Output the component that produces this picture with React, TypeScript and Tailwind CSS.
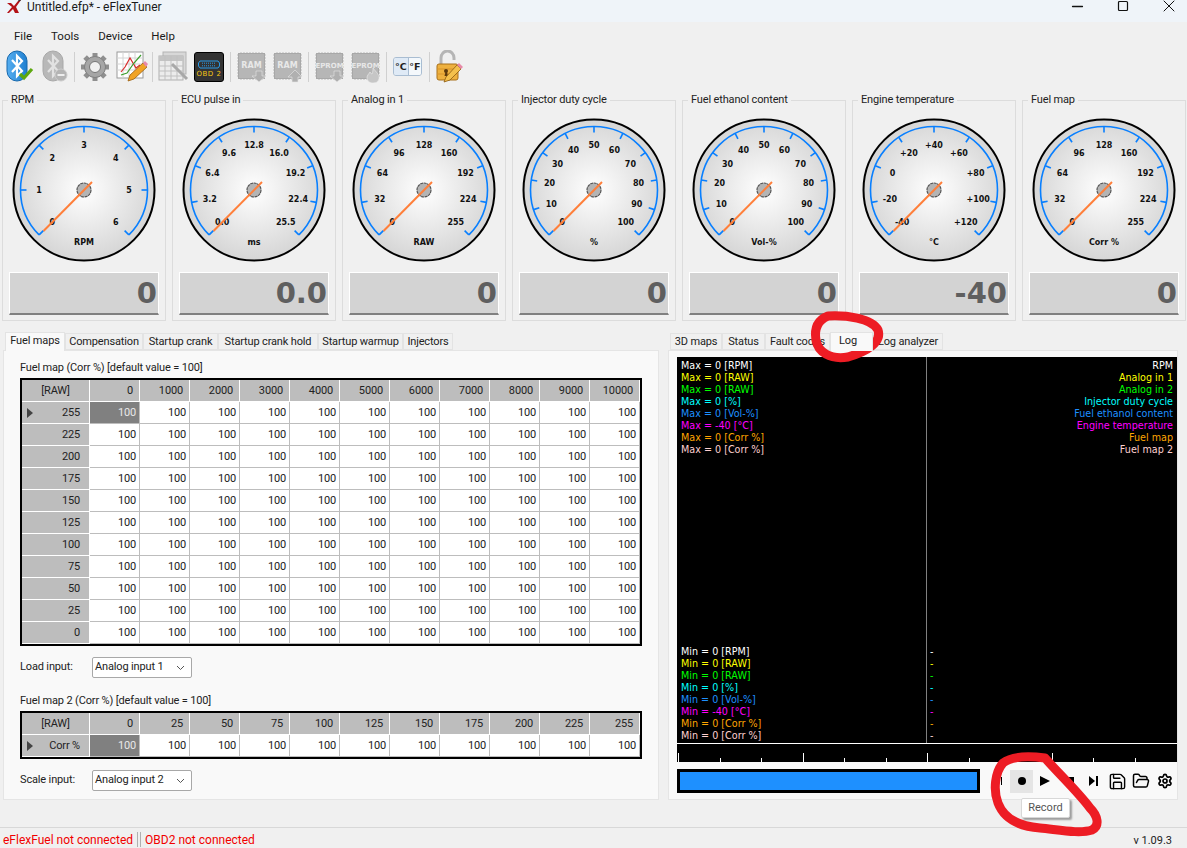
import { Save, FolderOpen, Settings, Minus, Square, X } from "lucide-react";

const gauges = [
  { title: "RPM", unit: "RPM", labels: ["0", "1", "2", "3", "4", "5", "6"], value: "0" },
  { title: "ECU pulse in", unit: "ms", labels: ["0.0", "3.2", "6.4", "9.6", "12.8", "16.0", "19.2", "22.4", "25.5"], value: "0.0" },
  { title: "Analog in 1", unit: "RAW", labels: ["0", "32", "64", "96", "128", "160", "192", "224", "255"], value: "0" },
  { title: "Injector duty cycle", unit: "%", labels: ["0", "10", "20", "30", "40", "50", "60", "70", "80", "90", "100"], value: "0" },
  { title: "Fuel ethanol content", unit: "Vol-%", labels: ["0", "10", "20", "30", "40", "50", "60", "70", "80", "90", "100"], value: "0" },
  { title: "Engine temperature", unit: "°C", labels: ["-40", "-20", "0", "+20", "+40", "+60", "+80", "+100", "+120"], value: "-40" },
  { title: "Fuel map", unit: "Corr %", labels: ["0", "32", "64", "96", "128", "160", "192", "224", "255"], value: "0" },
];

const logColors = ["text-white", "text-[#ffff00]", "text-[#00ff00]", "text-[#00ffff]", "text-[#1e90ff]", "text-[#ff00ff]", "text-[#ffa500]", "text-[#ffd0d0]"];
const logUnits = ["0 [RPM]", "0 [RAW]", "0 [RAW]", "0 [%]", "0 [Vol-%]", "-40 [°C]", "0 [Corr %]", "0 [Corr %]"];
const logNames = ["RPM", "Analog in 1", "Analog in 2", "Injector duty cycle", "Fuel ethanol content", "Engine temperature", "Fuel map", "Fuel map 2"];

const mapRows = ["255", "225", "200", "175", "150", "125", "100", "75", "50", "25", "0"];
const mapCols = ["0", "1000", "2000", "3000", "4000", "5000", "6000", "7000", "8000", "9000", "10000"];
const scaleCols = ["0", "25", "50", "75", "100", "125", "150", "175", "200", "225", "255"];

function polar(r: number, deg: number) {
  const a = (deg * Math.PI) / 180;
  return [75 + r * Math.sin(a), 75 - r * Math.cos(a)];
}

function Dial({ labels, unit }: { labels: string[]; unit: string }) {
  const [sx, sy] = polar(63.5, -135);
  const [ex, ey] = polar(63.5, 135);
  return (
    <svg width="150" height="150" viewBox="0 0 150 150" className="block">
      <defs>
        <radialGradient id="face">
          <stop offset="0%" stopColor="#ffffff" />
          <stop offset="100%" stopColor="#d6d6d6" />
        </radialGradient>
      </defs>
      <circle cx="75" cy="75" r="70.5" fill="url(#face)" stroke="#000" strokeWidth="2" />
      <path d={`M${sx} ${sy}A63.5 63.5 0 1 1 ${ex} ${ey}`} fill="none" stroke="#087fff" strokeWidth="1.6" />
      {labels.map((label, i) => {
        const deg = -135 + (i * 270) / (labels.length - 1);
        const [x1, y1] = polar(63.5, deg);
        const [x2, y2] = polar(57.5, deg);
        const [tx, ty] = polar(45, deg);
        return (
          <g key={label + i}>
            <line x1={x1} y1={y1} x2={x2} y2={y2} stroke="#087fff" strokeWidth="1.6" />
            <text x={tx} y={ty + 3} textAnchor="middle" fontSize="8" fontWeight="700" fontFamily="DejaVu Sans" fill="#111">
              {label}
            </text>
          </g>
        );
      })}
      <text x="75" y="130" textAnchor="middle" fontSize="8" fontWeight="700" fontFamily="DejaVu Sans" fill="#111">
        {unit}
      </text>
      <circle cx="75" cy="75" r="7" fill="#b4b4b4" stroke="#555" strokeWidth="1.2" strokeDasharray="3 0.6" />
      <line x1="34.5" y1="116" x2="83" y2="67" stroke="#ff7f3a" strokeWidth="2" />
    </svg>
  );
}

function GaugePanel({ title, unit, labels, value }: (typeof gauges)[number]) {
  return (
    <fieldset className="w-[164px] h-[228px] border border-[#dcdcdc] shrink-0 flex flex-col">
      <legend className="ml-[5px] px-[3px] text-[11px] tracking-[-0.15px] leading-[14px] text-[#222]">{title}</legend>
      <div className="ml-[6px] mt-[8px]">
        <Dial labels={labels} unit={unit} />
      </div>
      <div className="mx-[6px] mt-[7px] h-[43px] w-[150px] bg-[#d3d3d3] border border-white border-b-2 border-b-[#808080] flex items-center justify-end pr-[1px]">
        <span className="font-['DejaVu_Sans'] font-bold text-[29px] leading-none text-[#5f5f5f]">{value}</span>
      </div>
    </fieldset>
  );
}

function Tab({ label, width, active }: { label: string; width: string; active?: boolean }) {
  return (
    <div className={`${width} ${active ? "h-[19px] bg-[#f9f9f9] -mb-px z-10 border-b-0" : "h-[17px] mt-px bg-[#f0f0f0]"} border border-[#e3e3e3] text-center text-[11px] tracking-[-0.15px] leading-[15px] text-[#222] whitespace-nowrap`}>
      {label}
    </div>
  );
}

function Grid({ corner, cols, rows }: { corner: string; cols: string[]; rows: string[] }) {
  return (
    <div className="w-[622px] border-2 border-black grid grid-cols-[68px_repeat(11,50px)] auto-rows-[22px] text-[11px] tracking-[-0.15px] leading-[21px] text-[#222] bg-white">
      <div className="bg-[#bdbdbd] border-r border-b border-white text-center">{corner}</div>
      {cols.map((c, i) => (
        <div key={i} className="bg-[#bdbdbd] border-r border-b border-white text-right pr-[6px]">{c}</div>
      ))}
      {rows.map((r, ri) => (
        <div key={ri} className="contents">
          <div className="bg-[#bdbdbd] border-r border-b border-white text-right pr-[9px] relative">
            {ri === 0 && <span className="absolute left-[5px] top-[6px] w-0 h-0 border-y-[5px] border-y-transparent border-l-[6px] border-l-[#444]" />}
            {r}
          </div>
          {cols.map((_, ci) =>
            ri === 0 && ci === 0 ? (
              <div key={ci} className="bg-[#808080] text-[#e8e8e8] border-r border-b border-[#bdbdbd] text-right pr-[3px]">100</div>
            ) : (
              <div key={ci} className="border-r border-b border-[#bdbdbd] text-right pr-[3px]">100</div>
            )
          )}
        </div>
      ))}
    </div>
  );
}

function Combo({ label, value }: { label: string; value: string }) {
  return (
    <div className="flex items-center text-[11px] tracking-[-0.15px] text-[#222]">
      <span className="w-[72px]">{label}</span>
      <div className="w-[100px] h-[21px] bg-white border border-[#a8a8a8] rounded-[2px] flex items-center justify-between pl-[2px] pr-[6px]">
        <span>{value}</span>
        <svg width="9" height="6" viewBox="0 0 9 6"><path d="M1 1l3.5 3.5L8 1" fill="none" stroke="#555" /></svg>
      </div>
    </div>
  );
}

function Chip({ text, arrow, size = 8 }: { text: string; arrow: "down" | "up" | "fire"; size?: number }) {
  return (
    <svg width="30" height="32" viewBox="0 0 30 32" className="shrink-0">
      <g stroke="#c4c4c4" strokeWidth="1.2">
        {[3, 6, 9, 12, 15, 18, 21, 24].map((p) => (
          <g key={p}>
            <line x1={p + 1} y1="1" x2={p + 1} y2="29" />
            <line x1="0" y1={p + 1} x2="29" y2={p + 1} />
          </g>
        ))}
      </g>
      <rect x="1.500" y="2.500" width="26" height="25" fill="#b6b6b6" stroke="#a8a8a8" />
      <text x="14.500" y="17" textAnchor="middle" fontSize={size} fontWeight="700" fontFamily="DejaVu Sans" fill="#e8e8e8">{text}</text>
      {arrow === "down" && <path d="M19 20h6v5h4l-7 6-7-6h4z" fill="#b0b0b0" stroke="#e8e8e8" strokeWidth=".6" />}
      {arrow === "up" && <path d="M19 31h6v-5h4l-7-7-7 7h4z" fill="#b0b0b0" stroke="#e8e8e8" strokeWidth=".6" />}
      {arrow === "fire" && <path d="M22 17c3 4 7 7 6 11-1 3-3 4-6 4s-6-2-6-5c0-3 2-4 3-6 1 1 1 2 2 2 1-2 1-4 1-6z" fill="#c6c6c6" stroke="#eee" strokeWidth=".6" />}
    </svg>
  );
}

function Sep() {
  return <div className="w-px h-[30px] bg-[#d0d0d0] shrink-0" />;
}

function BluetoothIcon({ on }: { on: boolean }) {
  const body = on ? "#1f7fd0" : "#b4b4b4";
  return (
    <svg width="28" height="33" viewBox="0 0 28 33" className="shrink-0">
      <defs>
        <linearGradient id="bt" x1="0" x2="1">
          <stop offset="0" stopColor={on ? "#56aef0" : "#c4c4c4"} />
          <stop offset="1" stopColor={body} />
        </linearGradient>
      </defs>
      <rect x="1" y="1" width="20" height="30" rx="10" fill={on ? "url(#bt)" : "#b8b8b8"} stroke={on ? "#1668ad" : "#a8a8a8"} />
      <path d="M6 10l10 11-5 5V6l5 5L6 22" fill="none" stroke={on ? "#fff" : "#e2e2e2"} strokeWidth="2.2" />
      {on ? (
        <path d="M14 24l4 4 8-9" fill="none" stroke="#5da80f" strokeWidth="3.2" />
      ) : (
        <g>
          <circle cx="19" cy="25" r="6" fill="#b4b4b4" stroke="#ccc" />
          <rect x="15.5" y="24" width="7" height="2" fill="#eee" />
        </g>
      )}
    </svg>
  );
}

function Toolbar() {
  return (
    <div className="h-[43px] flex items-center pl-[6px] shrink-0">
      <BluetoothIcon on />
      <div className="ml-[8px]"><BluetoothIcon on={false} /></div>
      <div className="ml-[4px]"><Sep /></div>
      {/* gear */}
      <svg width="30" height="30" viewBox="0 0 30 30" className="ml-[5px] shrink-0">
        <g stroke="#8f8f8f" strokeWidth="5" strokeLinecap="butt">
          {[0, 45, 90, 135].map((d) => (
            <line key={d} x1="15" y1="1" x2="15" y2="29" transform={`rotate(${d} 15 15)`} />
          ))}
        </g>
        <circle cx="15" cy="15" r="10.5" fill="#a6a6a6" stroke="#7f7f7f" />
        <circle cx="15" cy="15" r="5.5" fill="#f0f0f0" stroke="#777" />
      </svg>
      {/* chart with pencil */}
      <svg width="32" height="31" viewBox="0 0 32 31" className="ml-[6px] shrink-0">
        <rect x="1" y="1" width="26" height="26" fill="#fff" stroke="#9a9a9a" />
        <path d="M1 7h26M1 13h26M1 19h26M7 1v26M13 1v26M19 1v26" stroke="#d4d4d4" />
        <path d="M5 21l4-5 5-9 6 10 4-3" fill="none" stroke="#d92b2b" strokeWidth="1.2" />
        <path d="M5 24l6-2 7-10 7-8" fill="none" stroke="#3c9e2e" strokeWidth="1.2" />
        <path d="M12 30l2-6 13-12 4 4-13 12z" fill="#f1a325" stroke="#9a5f10" strokeWidth=".8" />
        <path d="M27 12l2-2 3 3-2 3z" fill="#e889a8" />
      </svg>
      <div className="ml-[4px]"><Sep /></div>
      {/* table */}
      <svg width="31" height="31" viewBox="0 0 31 31" className="ml-[5px] shrink-0">
        <rect x="5" y="1" width="23" height="22" fill="#d8d8d8" stroke="#b4b4b4" />
        <rect x="1" y="5" width="24" height="24" fill="#ececec" stroke="#b0b0b0" />
        <rect x="1" y="5" width="24" height="5" fill="#c4c4c4" />
        <path d="M1 15h24M1 20h24M1 25h24M7 5v24M13 5v24M19 5v24" stroke="#c0c0c0" />
        <path d="M14 13l15 15" stroke="#a8a8a8" strokeWidth="3" />
      </svg>
      {/* OBD 2 */}
      <div className="ml-[5px] w-[30px] h-[30px] rounded-[3px] bg-[#333] border border-black flex flex-col items-center justify-end pb-[2px] shrink-0">
        <svg width="22" height="9" viewBox="0 0 22 9" className="mb-[1px]">
          <path d="M2 1h18l1.500 2v3L20 8H2L.5 6V3z" fill="none" stroke="#2a9be8" />
          <path d="M4 3.200h14M4 5.800h14" stroke="#2a9be8" strokeDasharray="1 1" />
        </svg>
        <span className="font-['DejaVu_Sans'] text-[7px] leading-[9px] tracking-[0.5px] text-[#f3c614]">OBD 2</span>
      </div>
      <div className="ml-[6px]"><Sep /></div>
      <div className="ml-[6px]"><Chip text="RAM" arrow="down" /></div>
      <div className="ml-[6px]"><Chip text="RAM" arrow="up" /></div>
      <div className="ml-[5px]"><Sep /></div>
      <div className="ml-[6px]"><Chip text="EPROM" arrow="down" size={7} /></div>
      <div className="ml-[6px]"><Chip text="EPROM" arrow="fire" size={7} /></div>
      <div className="ml-[5px]"><Sep /></div>
      <div className="ml-[6px] w-[29px] h-[19px] rounded-[3px] border border-[#a9bdd2] flex text-[9.5px] leading-[17px] font-bold font-['DejaVu_Sans'] text-[#222] overflow-hidden shrink-0">
        <span className="w-1/2 text-center bg-[#dfeaf6]">°C</span>
        <span className="w-1/2 text-center bg-[#f4f8fc] border-l border-[#a9bdd2]">°F</span>
      </div>
      <div className="ml-[7px]"><Sep /></div>
      {/* open lock with pencil */}
      <svg width="28" height="33" viewBox="0 0 28 33" className="ml-[6px] shrink-0">
        <path d="M5 15V8c0-4 3-7 6.500-7S18 4 18 8v2" fill="none" stroke="#b5b5b5" strokeWidth="3" />
        <rect x="1" y="14" width="21" height="16" rx="2" fill="#eeb13f" stroke="#a8701a" />
        <path d="M1 19h21M1 24h21" stroke="#d8932a" />
        <circle cx="10" cy="21" r="2" fill="#5d3a0c" />
        <path d="M9.500 22h1.500l1 4H8.500z" fill="#5d3a0c" />
        <path d="M8 32l2-5 11-12 4 4-11 11z" fill="#f4c04c" stroke="#8c5a10" strokeWidth=".8" />
        <path d="M21 15l2-2 4 4-2 2z" fill="#e889a8" />
      </svg>
    </div>
  );
}

function LogView() {
  const ticks = Array.from({ length: 12 }, (_, i) => i);
  return (
    <div className="w-[500px] h-[405px] bg-black flex flex-col font-['DejaVu_Sans'] text-[9.6px] leading-[12px]">
      <div className="h-[386px] flex border-b border-white box-content">
        <div className="w-[250px] border-r border-[#808080] flex flex-col justify-between pt-[3px] pb-[1px] pl-[4px]">
          <div>
            {logUnits.map((u, i) => (
              <div key={i} className={logColors[i]}>Max = {u}</div>
            ))}
          </div>
          <div>
            {logUnits.map((u, i) => (
              <div key={i} className={logColors[i]}>Min = {u}</div>
            ))}
          </div>
        </div>
        <div className="flex-1 flex flex-col justify-between pt-[3px] pb-[1px] pl-[3px] pr-[4px]">
          <div className="text-right">
            {logNames.map((n, i) => (
              <div key={i} className={logColors[i]}>{n}</div>
            ))}
          </div>
          <div>
            {logNames.map((_, i) => (
              <div key={i} className={logColors[i]}>-</div>
            ))}
          </div>
        </div>
      </div>
      <div className="flex-1 flex items-end pl-[1px]">
        {ticks.map((i) => (
          <div key={i} className="w-[41.5px] flex shrink-0">
            <div className={`w-px bg-white ${i % 3 === 0 ? "h-[9px]" : "h-[4px]"}`} />
          </div>
        ))}
      </div>
    </div>
  );
}

function Player() {
  return (
    <div className="flex items-center mt-[7px] h-[24px]">
      <div className="w-[303px] h-[24px] border-[3px] border-black bg-[#1e90ff]" />
      <div className="w-px h-[8px] bg-black ml-[21px]" />
      <div className="w-[23px] h-[23px] ml-[8px] bg-[#e5e5e5] flex items-center justify-center">
        <div className="w-[8px] h-[8px] rounded-full bg-black" />
      </div>
      <div className="w-[24px] flex justify-center">
        <div className="w-0 h-0 border-y-[5px] border-y-transparent border-l-[10px] border-l-black" />
      </div>
      <div className="w-[24px] flex justify-center">
        <div className="w-[9px] h-[9px] bg-black" />
      </div>
      <div className="w-[24px] flex justify-center gap-[1px]">
        <div className="w-0 h-0 border-y-[5px] border-y-transparent border-l-[6px] border-l-black" />
        <div className="w-[2px] h-[10px] bg-black" />
      </div>
      <div className="w-[24px] flex justify-center"><Save size={19} strokeWidth={1.8} color="#000" /></div>
      <div className="w-[24px] flex justify-center"><FolderOpen size={18} strokeWidth={2} color="#000" /></div>
      <div className="w-[24px] flex justify-center"><Settings size={16} strokeWidth={2.6} color="#000" /></div>
    </div>
  );
}

export default function App() {
  return (
    <div className="relative w-[1187px] h-[848px] overflow-hidden bg-[#f0f0f0] flex flex-col font-['Roboto',sans-serif] text-[12px]">
      {/* title bar */}
      <div className="h-[22px] bg-[#eff4f9] flex items-center pl-[6px] pb-[8px] shrink-0">
        <svg width="16" height="14" viewBox="0 0 16 14" className="shrink-0">
          <path d="M1 3h4l3 3 4-5 3-1-5 7 3 6H9L7 9l-4 4H1l5-6z" fill="#b31217" />
          <path d="M12 1l3-1" stroke="#333" />
        </svg>
        <span className="ml-[5px] text-[12px] text-[#1a1a1a]">Untitled.efp* - eFlexTuner</span>
        <div className="ml-auto flex items-center pb-[2px]">
          <Minus size={17} strokeWidth={1.8} color="#111" className="mr-[31px]" />
          <Square size={12} strokeWidth={2.4} color="#111" className="mr-[30px]" />
          <X size={20} strokeWidth={1.2} color="#111" className="mr-[8px]" />
        </div>
      </div>
      {/* menu */}
      <div className="h-[23px] flex items-center pl-[14px] pt-[7px] gap-[19px] text-[11.5px] text-[#1a1a1a] shrink-0">
        <span>File</span>
        <span>Tools</span>
        <span>Device</span>
        <span>Help</span>
      </div>
      <Toolbar />
      {/* gauges */}
      <div className="flex gap-[6px] pl-[2px] mt-[5px] shrink-0">
        {gauges.map((g) => (
          <GaugePanel key={g.title} {...g} />
        ))}
      </div>
      {/* tabbed panes */}
      <div className="flex mt-[11px] shrink-0">
        <div className="w-[656px] ml-[3px] flex flex-col">
          <div className="flex pl-[2px] h-[18px]">
            <Tab label="Fuel maps" width="w-[60px]" active />
            <Tab label="Compensation" width="w-[78px]" />
            <Tab label="Startup crank" width="w-[75px]" />
            <Tab label="Startup crank hold" width="w-[100px]" />
            <Tab label="Startup warmup" width="w-[85px]" />
            <Tab label="Injectors" width="w-[50px]" />
          </div>
          <div className="h-[450px] bg-[#f9f9f9] border border-[#e5e5e5] pl-[16px] pt-[10px]">
            <div className="text-[11px] tracking-[-0.15px] leading-[14px] mb-[3px] text-[#222]">Fuel map (Corr %) [default value = 100]</div>
            <Grid corner="[RAW]" cols={mapCols} rows={mapRows} />
            <div className="mt-[11px]"><Combo label="Load input:" value="Analog input 1" /></div>
            <div className="text-[11px] tracking-[-0.15px] leading-[14px] mt-[16px] mb-[3px] text-[#222]">Fuel map 2 (Corr %) [default value = 100]</div>
            <Grid corner="[RAW]" cols={scaleCols} rows={["Corr %"]} />
            <div className="mt-[11px]"><Combo label="Scale input:" value="Analog input 2" /></div>
          </div>
        </div>
        <div className="w-[510px] ml-[9px] flex flex-col">
          <div className="flex pl-[2px] h-[18px]">
            <Tab label="3D maps" width="w-[52px]" />
            <Tab label="Status" width="w-[43px]" />
            <Tab label="Fault codes" width="w-[65px]" />
            <Tab label="Log" width="w-[43px] pr-[7px]" active />
            <Tab label="Log analyzer" width="w-[70px]" />
          </div>
          <div className="h-[450px] bg-[#f9f9f9] border border-[#e5e5e5] pl-[8px] pt-[6px]">
            <LogView />
            <Player />
          </div>
        </div>
      </div>
      {/* status bar */}
      <div className="mt-auto h-[21px] border-t border-[#d8d8d8] flex items-center pl-[3px] pr-[15px] pt-[3px] text-[12px] text-[#f00000] shrink-0">
        <span>eFlexFuel not connected</span>
        <div className="w-[4px] h-[15px] ml-[4px] border-x border-[#b0b0b0]" />
        <span className="ml-[4px]">OBD2 not connected</span>
        <span className="ml-auto pt-[4px] text-[11px] text-[#222]">v 1.09.3</span>
      </div>
      {/* tooltip */}
      <div className="absolute left-[1021px] top-[798px] w-[49px] h-[20px] text-center bg-white border border-[#d8d8d8] rounded-[2px] shadow-[2px_2px_2px_rgba(0,0,0,0.35)] text-[11px] leading-[18px] text-[#555]">
        Record
      </div>
      {/* hand drawn annotations */}
      <svg width="1187" height="848" viewBox="0 0 1187 848" className="absolute inset-0 pointer-events-none">
        <path d="M828 316C845 315 872 318 878 330C882 342 868 351 848 357C830 360 818 352 816 340C814 328 818 320 828 316" fill="none" stroke="#ed1c24" strokeWidth="9" strokeLinecap="round" />
        <path d="M1045 758C1030 756 1012 756 1003 763C995 772 993 790 998 803C1003 816 1014 826 1040 828C1060 830 1080 834 1092 830C1100 826 1098 816 1090 808C1078 792 1060 775 1045 758" fill="none" stroke="#ed1c24" strokeWidth="9" strokeLinecap="round" />
      </svg>
    </div>
  );
}
